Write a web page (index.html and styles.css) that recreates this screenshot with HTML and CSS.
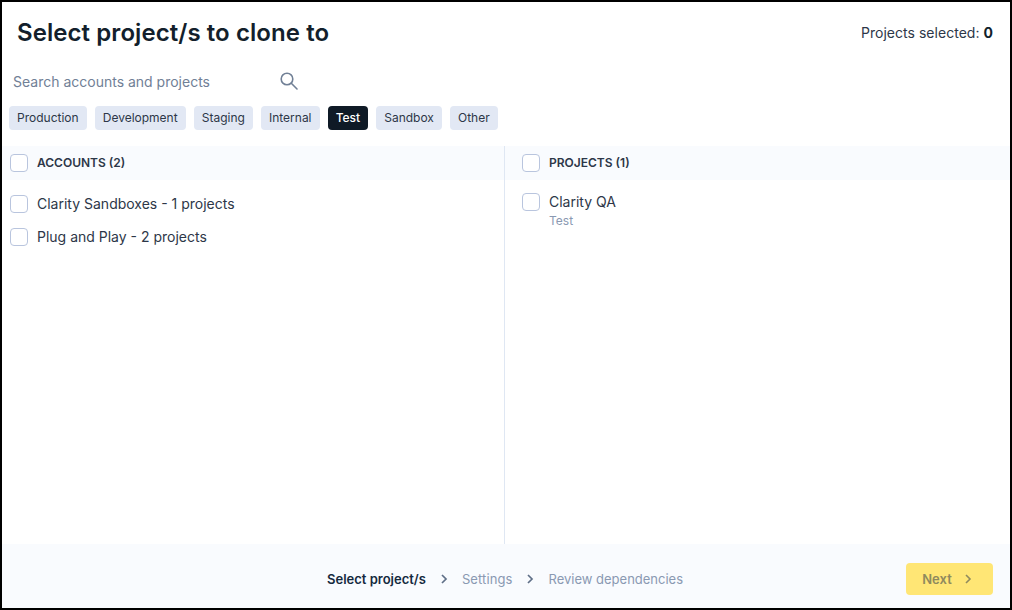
FILE: index.html
```html
<!DOCTYPE html>
<html lang="en">
<head>
  <meta charset="UTF-8">
  <title>Select project/s to clone to</title>
  <link rel="stylesheet" href="styles.css">
</head>
<body>
  <div class="dialog">
    <div class="dialog-header">
      <h1 class="title">Select project/s to clone to</h1>
      <div class="selected-count">Projects selected: <b>0</b></div>
    </div>

    <div class="search">
      <span class="search-text">Search accounts and projects</span>
      <svg class="search-icon" width="18" height="18" viewBox="0 0 18 18" fill="none" stroke="currentColor" stroke-width="1.6" stroke-linecap="round">
        <circle cx="7" cy="7" r="5.8" />
        <path d="M11.3 11.3L17 17" />
      </svg>
    </div>

    <div class="chips">
      <span class="chip">Production</span>
      <span class="chip">Development</span>
      <span class="chip">Staging</span>
      <span class="chip">Internal</span>
      <span class="chip chip-active">Test</span>
      <span class="chip">Sandbox</span>
      <span class="chip">Other</span>
    </div>

    <div class="columns">
      <!-- Accounts -->
      <div class="column column-left">
        <div class="column-header">
          <span class="checkbox"></span>
          <span class="column-title">ACCOUNTS (2)</span>
        </div>
        <div class="account-list">
          <div class="account-row">
            <span class="checkbox"></span>
            <span class="row-name">Clarity Sandboxes - 1 projects</span>
          </div>
          <div class="account-row">
            <span class="checkbox"></span>
            <span class="row-name">Plug and Play - 2 projects</span>
          </div>
        </div>
      </div>

      <!-- Projects -->
      <div class="column column-right">
        <div class="column-header">
          <span class="checkbox"></span>
          <span class="column-title">PROJECTS (1)</span>
        </div>
        <div class="project-list">
          <div class="project-row">
            <span class="checkbox"></span>
            <div>
              <div class="row-name">Clarity QA</div>
              <div class="row-sub">Test</div>
            </div>
          </div>
        </div>
      </div>
    </div>

    <div class="footer">
      <div class="steps">
        <span class="step step-current">Select project/s</span>
        <svg class="step-arrow" width="8" height="10" viewBox="0 0 8 10" fill="none" stroke="currentColor" stroke-width="1.7">
          <path d="M2 1l4 4-4 4" />
        </svg>
        <span class="step">Settings</span>
        <svg class="step-arrow" width="8" height="10" viewBox="0 0 8 10" fill="none" stroke="currentColor" stroke-width="1.7">
          <path d="M2 1l4 4-4 4" />
        </svg>
        <span class="step">Review dependencies</span>
      </div>
      <button class="btn-next">
        Next
        <svg width="8" height="10" viewBox="0 0 8 10" fill="none" stroke="currentColor" stroke-width="1.6">
          <path d="M2 1l4 4-4 4" />
        </svg>
      </button>
    </div>
  </div>
</body>
</html>
```

FILE: styles.css
```css
* {
  box-sizing: border-box;
}

html,
body {
  height: 100%;
}

body {
  margin: 0;
  font-family: Inter, "Liberation Sans", sans-serif;
  background: #ffffff;
  color: #2d3748;
}

.dialog {
  display: flex;
  flex-direction: column;
  height: 610px;
  border: 2px solid #000000;
}

.dialog-header {
  display: flex;
  align-items: center;
  justify-content: space-between;
  height: 62px;
  padding: 0 17px 2px 15px;
}

.title {
  margin: 0;
  font-size: 24px;
  font-weight: 600;
  letter-spacing: 0.07px;
  color: #131f2c;
}

.selected-count {
  font-size: 14px;
  letter-spacing: 0.03px;
  color: #2d3748;
}

.selected-count b {
  font-weight: 700;
  color: #131f2c;
}

.search {
  display: flex;
  align-items: center;
  justify-content: space-between;
  width: 296px;
  height: 35px;
  padding-left: 11px;
}

.search-text {
  font-size: 14px;
  color: #718096;
}

.search-icon {
  margin-top: -1px;
  color: #718096;
}

.chips {
  display: flex;
  gap: 8px;
  margin-top: 7px;
  padding-left: 7px;
}

.chip {
  display: flex;
  align-items: center;
  height: 24px;
  padding: 0 8.05px 1px;
  border-radius: 4px;
  background: #e2e8f4;
  font-size: 12px;
  color: #2d3748;
}

.chip-active {
  background: #0f1a26;
  color: #ffffff;
  font-weight: 500;
}

.columns {
  display: flex;
  flex: 1;
  margin-top: 16px;
}

.column-left {
  width: 503px;
  border-right: 1px solid #dfe7f3;
}

.column-right {
  flex: 1;
}

.column-header {
  display: flex;
  align-items: center;
  gap: 9px;
  height: 34px;
  background: #f9fbfe;
}

.column-left .column-header {
  padding-left: 8px;
}

.column-right .column-header {
  padding-left: 17px;
}

.column-title {
  margin-top: -2px;
  font-size: 12px;
  font-weight: 600;
  color: #2d3748;
}

.checkbox {
  flex: none;
  width: 18px;
  height: 18px;
  background: #ffffff;
  border: 1px solid #b9c5de;
  border-radius: 4px;
}

.account-list {
  padding: 7px 0 0 8px;
}

.account-row {
  display: flex;
  align-items: center;
  gap: 9px;
  height: 33px;
}

.project-list {
  padding: 13px 0 0 17px;
}

.project-row {
  display: flex;
  align-items: flex-start;
  gap: 9px;
}

.row-name {
  font-size: 14px;
  line-height: 18px;
  color: #2d3748;
}

.row-sub {
  margin-top: 2px;
  font-size: 12px;
  line-height: 15px;
  color: #8a99b2;
}

.footer {
  position: relative;
  display: flex;
  align-items: center;
  justify-content: flex-end;
  flex: none;
  height: 64px;
  padding: 6px 17px 0 0;
  background: #f9fbfe;
}

.steps {
  position: absolute;
  left: 325px;
  top: 6px;
  bottom: 0;
  display: flex;
  align-items: center;
  font-size: 13px;
}

.step {
  letter-spacing: 0.1px;
  color: #8a99b2;
}

.step:last-child {
  letter-spacing: 0;
}

.step-current {
  font-weight: 600;
  letter-spacing: 0;
  color: #14293d;
}

.step-arrow {
  margin: 0 14px;
  color: #5f6f87;
}

.btn-next {
  display: flex;
  align-items: center;
  justify-content: center;
  gap: 12px;
  width: 87px;
  height: 32px;
  padding: 0 5px 0 0;
  border: none;
  border-radius: 4px;
  background: #ffe675;
  font-family: inherit;
  font-size: 13px;
  font-weight: 600;
  color: #8f8a5e;
}
```
